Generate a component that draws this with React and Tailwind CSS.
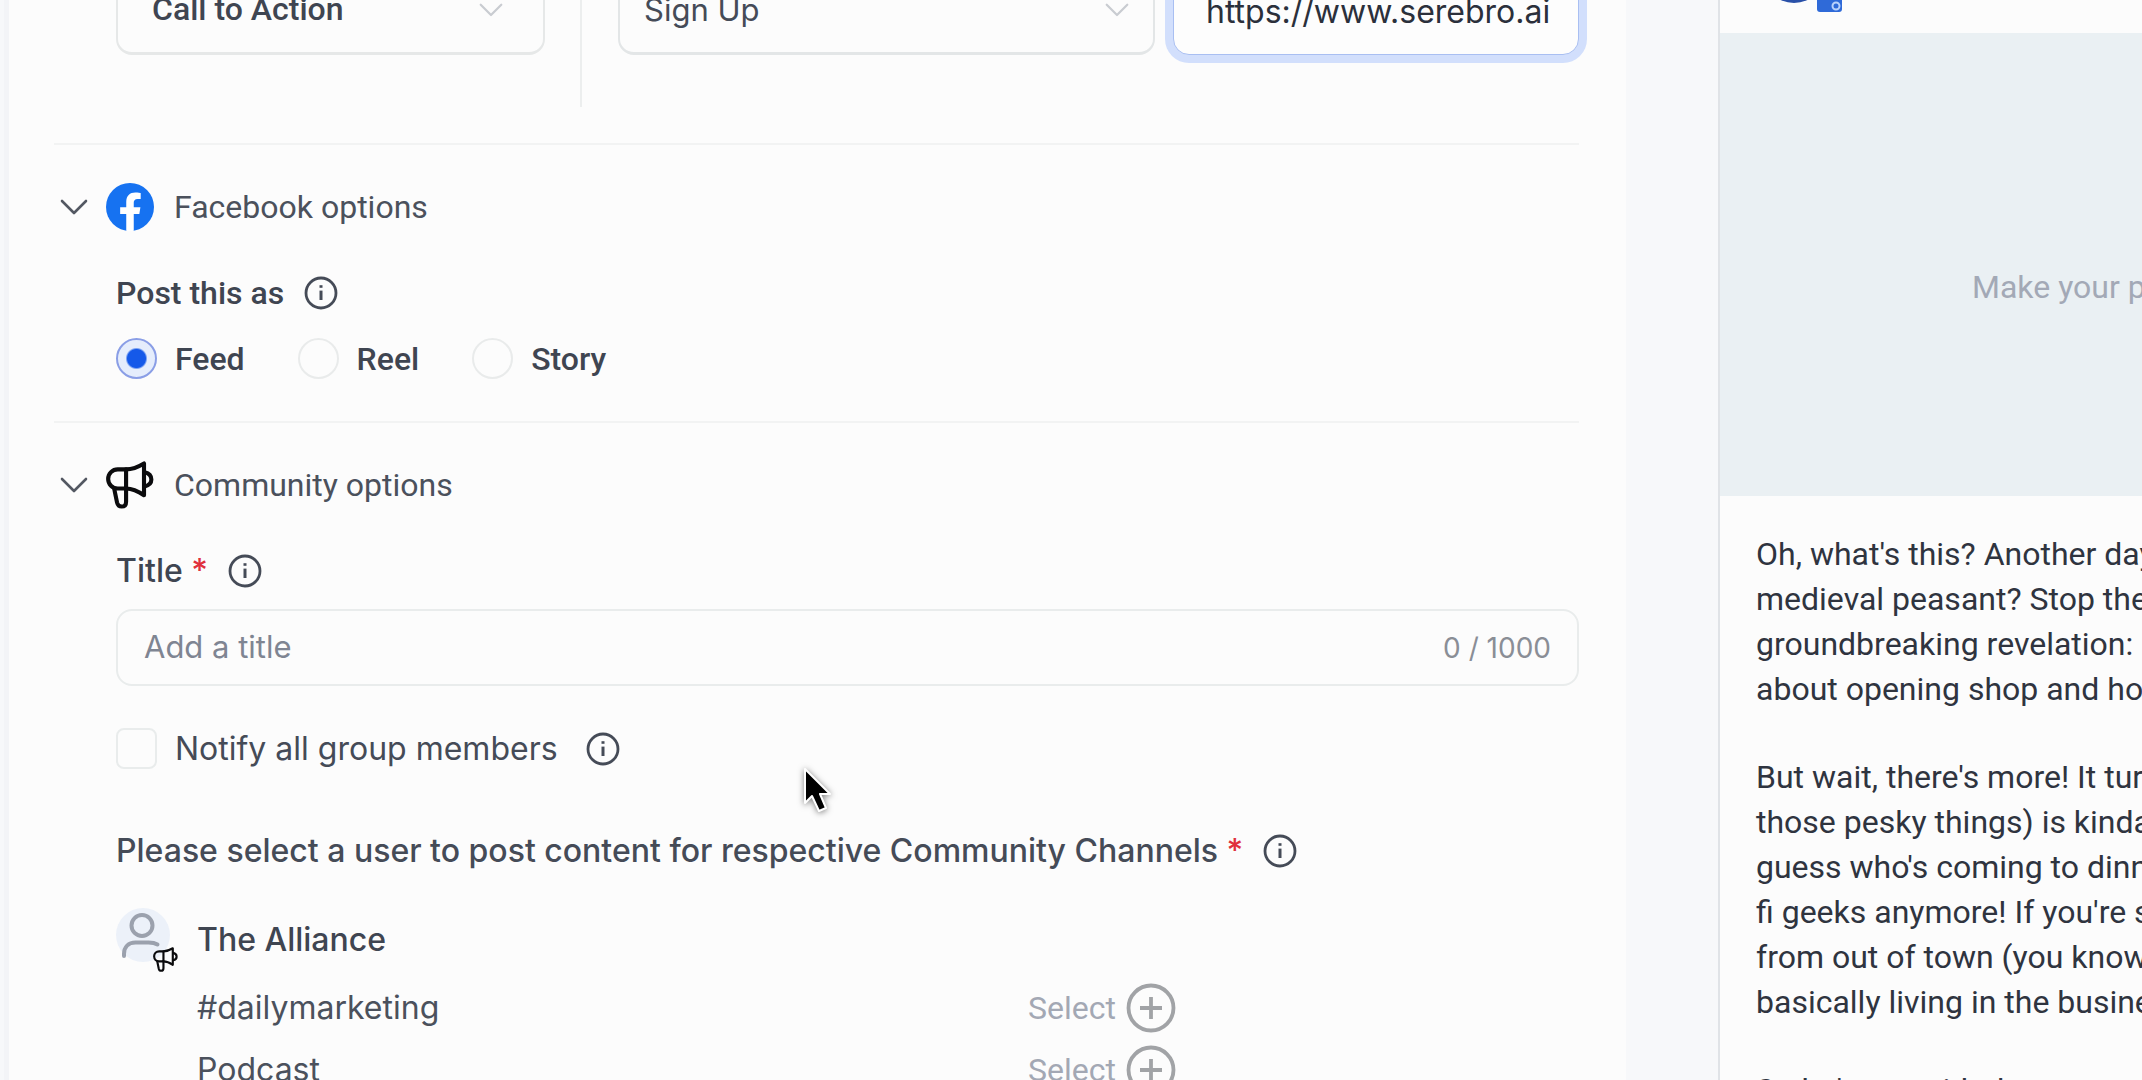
import React from "react";

const INTER = "font-['Inter',sans-serif] [font-optical-sizing:none]";

function Chevron({ className }) {
  return (
    <svg viewBox="0 0 28 16" fill="none" stroke="currentColor" strokeWidth="2.6" strokeLinecap="round" strokeLinejoin="round" className={className} aria-hidden="true">
      <path d="M2 2l12 12L26 2" />
    </svg>
  );
}

function InfoButton({ label }) {
  return (
    <button type="button" aria-label={label} className="shrink-0 text-[#454b57]">
      <svg viewBox="0 0 34 34" fill="none" stroke="currentColor" className="size-[34px]">
        <circle cx="17" cy="17" r="15" strokeWidth="2.8" />
        <path d="M17 14.6v9.4" strokeWidth="3" />
        <path d="M17 9.2v2.6" strokeWidth="3" />
      </svg>
    </button>
  );
}

function Megaphone({ className }) {
  return (
    <svg viewBox="0 0 49 49" fill="none" stroke="#0b0b0d" strokeWidth="4.2" strokeLinejoin="round" strokeLinecap="round" className={className} aria-hidden="true">
      <path d="M20.5 8.5H12a9.7 9.7 0 0 0 0 19.6h8.5z" />
      <path d="M20.5 8.5C27.5 8.5 33 6 38.8 2.5V35C33 31 27.5 28.2 20.5 28.1" />
      <path d="M39.5 11.5c4.5 1 6.8 3.5 6.8 7.500s-2.3 6-6.8 7" />
      <path d="M8.3 28l3 14.500c.7 3 2.300 4 4.700 4 3 0 4.500-2 4.500-5V28" />
    </svg>
  );
}

function FacebookLogo() {
  return (
    <svg viewBox="0 0 24 24" className="size-12 shrink-0" aria-hidden="true">
      <circle cx="12" cy="12" r="12" fill="#1672f1" />
      <path fill="#fff" d="M16.671 15.543l.532-3.470h-3.328v-2.250c0-.949.465-1.874 1.956-1.874h1.513V4.996s-1.374-.235-2.686-.235c-2.741 0-4.533 1.662-4.533 4.669v2.642H7.078v3.470h3.047v8.385a12.090 12.090 0 0 0 3.750 0v-8.385h2.796z" />
    </svg>
  );
}

function Section({ icon, title, children }) {
  return (
    <section className="border-t-2 border-[#f2f3f3] pt-[38px]">
      <button type="button" aria-expanded="true" className="flex h-12 items-center pl-1.5">
        <Chevron className="mr-[18px] w-7 text-[#535862]" />
        {icon}
        <h2 className="ml-5 text-[32px] leading-10 text-[#4b515c]">{title}</h2>
      </button>
      <div className="pl-[62px]">{children}</div>
    </section>
  );
}

function Picker({ label, value, className, wrapper, chevron }) {
  return (
    <div className={wrapper}>
      <select aria-label={label} defaultValue={value} className={className}>
        <option>{value}</option>
      </select>
      <Chevron className={`pointer-events-none absolute top-9 w-6 text-[#c9ccd1] ${chevron}`} />
    </div>
  );
}

function Radio({ label, checked }) {
  return (
    <label className="flex items-center gap-[18px] text-[32px] leading-10 font-medium text-[#3f4551]">
      <input
        type="radio"
        name="post-as"
        defaultChecked={checked}
        className="size-[41px] appearance-none rounded-full border-2 border-[#e9ebeb] checked:border-[#8a9ee6] checked:bg-[radial-gradient(circle,#1559e9_9px,#e5edfc_11px)]"
      />
      {label}
    </label>
  );
}

function Channel({ name }) {
  return (
    <li className="flex h-[62px] items-center">
      <span className={`w-[832px] pl-[81px] text-[32px] leading-10 text-[#4b515c] ${INTER}`}>{name}</span>
      <button type="button" className="ml-20 flex items-center gap-[10px] text-[32px] leading-10 text-[#a3a8b4]">
        Select
        <svg viewBox="0 0 50 50" fill="none" stroke="#a1a3a6" strokeWidth="3.8" className="size-[50px]" aria-hidden="true">
          <circle cx="25" cy="25" r="22.5" />
          <path d="M25 14v22M14 25h22" />
        </svg>
      </button>
    </li>
  );
}

function Composer() {
  return (
    <main className="ml-1 min-w-0 flex-1 border-l-[5px] border-[#f3f4f7] bg-[#fcfcfc] pr-[47px] pl-[45px]">
      <div className="-mt-[33px] mb-[36px] flex pl-[62px]">
        <Picker
          label="Link type"
          value="Call to Action"
          wrapper="relative w-[429px]"
          chevron="right-[42px]"
          className="h-[88px] w-full appearance-none rounded-2xl border-2 border-b-3 border-[#e6e8e8] pb-1 pl-[34px] text-[32px] font-medium text-[#3f4551]"
        />
        <div className="ml-[35px] flex flex-1 border-l-2 border-[#eceeee] pb-[52px] pl-9">
          <Picker
            label="Action"
            value="Sign Up"
            wrapper={`relative flex-1 ${INTER}`}
            chevron="right-[26px]"
            className="h-[88px] w-full appearance-none rounded-2xl border-2 border-b-3 border-[#e3e6e7] pl-6 text-[31px] text-[#454b57]"
          />
          <input
            aria-label="Link URL"
            defaultValue="https://www.serebro.ai"
            className={`ml-[18px] h-[88px] w-[406px] rounded-2xl border border-[#a9bff2] bg-[#fdfdfd] pl-8 text-[32px] text-[#2b303b] ring-8 ring-[#d2dffc] outline-none ${INTER}`}
          />
        </div>
      </div>

      <Section icon={<FacebookLogo />} title="Facebook options">
        <div className="mt-[42px] flex h-10 items-center gap-5">
          <h3 className="text-[32px] leading-10 font-medium text-[#3f4551]">Post this as</h3>
          <InfoButton label="About post types" />
        </div>
        <div role="radiogroup" aria-label="Post this as" className="mt-[25px] mb-[42px] flex gap-[53px]">
          <Radio label="Feed" checked />
          <Radio label="Reel" />
          <Radio label="Story" />
        </div>
      </Section>

      <Section icon={<Megaphone className="size-12 shrink-0" />} title="Community options">
        <div className={`mt-[42px] flex h-10 items-center text-[32px] leading-10 font-medium text-[#3f4551] ${INTER}`}>
          <label htmlFor="post-title" className="mr-5">
            Title <span className="text-[#e0303c]">*</span>
          </label>
          <InfoButton label="About the title" />
        </div>
        <div className={`mt-[18px] flex h-[77px] items-center rounded-2xl border-2 border-[#e9ecec] px-[26px] ${INTER}`}>
          <input id="post-title" placeholder="Add a title" className="min-w-0 flex-1 text-[31px] outline-none placeholder:text-[#7f8592]" />
          <span className="text-[28px] text-[#8a8e96]">0 / 1000</span>
        </div>
        <div className="mt-[42px] flex h-[41px] items-center gap-7">
          <label className={`flex items-center gap-[18px] text-[32px] leading-10 text-[#454b57] ${INTER}`}>
            <input type="checkbox" className="size-[41px] appearance-none rounded-lg border-2 border-[#e9ecec]" />
            Notify all group members
          </label>
          <InfoButton label="About notifications" />
        </div>
        <div className="mt-[62px] flex h-10 items-center gap-5">
          <h3 className={`text-[32px] leading-10 font-medium whitespace-nowrap text-[#454b57] ${INTER}`}>
            Please select a user to post content for respective Community Channels <span className="text-[#e0303c]">*</span>
          </h3>
          <InfoButton label="About channel users" />
        </div>
        <div className="mt-[37px] mb-[5px] flex h-16 items-center">
          <div className="relative h-16 w-[62px]">
            <svg viewBox="0 0 54 54" fill="none" stroke="#9ba1ad" strokeWidth="4" strokeLinecap="round" className="size-[54px]" aria-hidden="true">
              <circle cx="27" cy="27" r="27" fill="#ecf1f9" stroke="none" />
              <circle cx="26" cy="17.5" r="10.5" />
              <path d="M8 48v-2c0-7 4.500-11.500 11.500-11.500h13c4 0 6.500.5 9 2" />
            </svg>
            <Megaphone className="absolute right-0 bottom-0 size-[25px]" />
          </div>
          <h4 className={`ml-[19px] text-[32px] leading-10 font-medium text-[#3f4551] ${INTER}`}>The Alliance</h4>
        </div>
        <ul>
          <Channel name="#dailymarketing" />
          <Channel name="Podcast" />
        </ul>
      </Section>
    </main>
  );
}

const PARAGRAPHS = [
  ["Oh, what's this? Another day", "medieval peasant? Stop the", "groundbreaking revelation: n", "about opening shop and hoping"],
  ["But wait, there's more! It turns", "those pesky things) is kinda", "guess who's coming to dinner", "fi geeks anymore! If you're so", "from out of town (you know", "basically living in the business"],
  ["So let's get with the program"],
];

function Preview() {
  return (
    <aside className="ml-[92px] w-[424px] shrink-0 overflow-hidden border-l-2 border-[#e0e3e7] bg-[#fcfcfc] whitespace-nowrap">
      <header className="h-[33px] overflow-hidden pl-[34px]">
        <svg viewBox="0 -47 96 80" className="-mt-[47px] h-20 w-24" aria-hidden="true">
          <circle cx="40" cy="-29" r="32" fill="#2950a8" />
          <rect x="63" y="-12" width="25" height="24" rx="3" fill="#2f6ad8" />
          <circle cx="82" cy="6" r="3.500" fill="none" stroke="#b9d2fb" strokeWidth="2" />
        </svg>
      </header>
      <div className="h-[463px] bg-[#eaf0f3] pt-[234px] pl-[252px] text-[32px] leading-10 text-[#a3a9b6]">Make your post</div>
      <div className="space-y-[43px] pt-[36px] pl-9 text-[32px] leading-[45px] text-[#2f343f]">
        {PARAGRAPHS.map((lines, i) => (
          <p key={i}>
            {lines.map((line) => (
              <span key={line} className="block">{line}</span>
            ))}
          </p>
        ))}
      </div>
    </aside>
  );
}

export default function App() {
  return (
    <div className="relative flex h-screen overflow-hidden bg-[#f7f8fa] font-['Roboto',sans-serif]">
      <Composer />
      <Preview />
      <svg viewBox="0 0 32 48" className="pointer-events-none absolute top-[766px] left-[802px] w-8 overflow-visible drop-shadow-[0_1px_3px_rgb(0_0_0/0.5)]" aria-hidden="true">
        <path d="M3 3v34l7-7 7 15 7-3-6-14h10z" fill="#000" stroke="#fff" strokeWidth="2" strokeLinejoin="round" />
      </svg>
    </div>
  );
}
